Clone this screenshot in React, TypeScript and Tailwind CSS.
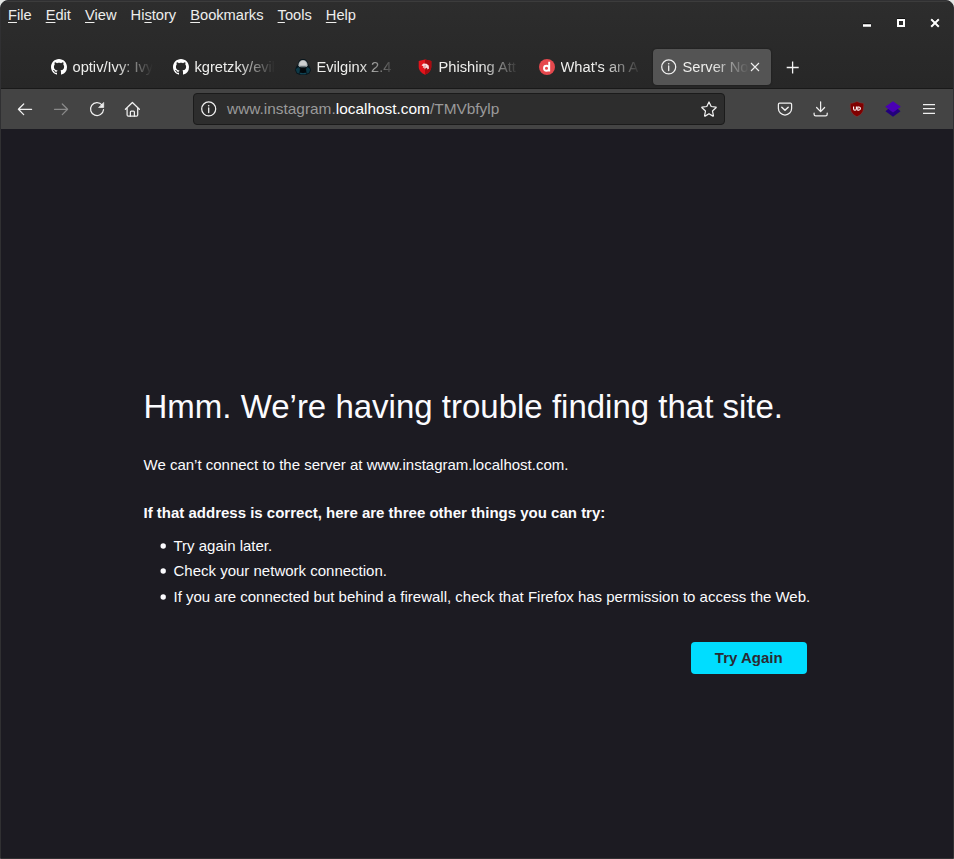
import type { ReactNode } from "react";

const menus: [string, string, string][] = [
  ["", "F", "ile"],
  ["", "E", "dit"],
  ["", "V", "iew"],
  ["Hi", "s", "tory"],
  ["", "B", "ookmarks"],
  ["", "T", "ools"],
  ["", "H", "elp"],
];

function GitHub() {
  return (
    <svg width="16" height="16" viewBox="0 0 16 16" fill="#fff">
      <path d="M8 0C3.58 0 0 3.58 0 8c0 3.54 2.29 6.53 5.47 7.59.4.07.55-.17.55-.38 0-.19-.01-.82-.01-1.49-2.01.37-2.53-.49-2.69-.94-.09-.23-.48-.94-.82-1.13-.28-.15-.68-.52-.01-.53.63-.01 1.08.58 1.23.82.72 1.21 1.87.87 2.33.66.07-.52.28-.87.51-1.07-1.78-.2-3.64-.89-3.64-3.95 0-.87.31-1.59.82-2.15-.08-.2-.36-1.02.08-2.12 0 0 .67-.21 2.2.82.64-.18 1.32-.27 2-.27s1.36.09 2 .27c1.53-1.04 2.2-.82 2.2-.82.44 1.1.16 1.92.08 2.12.51.56.82 1.27.82 2.15 0 3.07-1.87 3.75-3.65 3.95.29.25.54.73.54 1.48 0 1.07-.01 1.93-.01 2.2 0 .21.15.46.55.38A8.01 8.01 0 0 0 16 8c0-4.42-3.58-8-8-8z" />
    </svg>
  );
}

function Hooded() {
  return (
    <svg width="16" height="16" viewBox="0 0 16 16">
      <path d="M3 5Q3.500 0 8 0t5 5l2 3 1 3-1.500 3.500L11 16H5l-3.500-1.500L0 11l1-3z" fill="#08161d" />
      <path d="M3.300 6.500Q3.700 1 8 1t4.700 5.500L11.500 8h-7z" fill="#9da3a6" />
      <path d="M4.500 4Q5.500 1.500 8 1.500t3.500 2.500l.3 2.500H4.200z" fill="#cdd0d1" />
      <path d="M5 7.200h6L10.200 8.500H5.800z" fill="#59666b" />
      <path d="M.7 10.300l2.800-2.300L5 10l-.8 4.400L2 13.700zM15.300 10.300L12.500 8 11 10l.8 4.400 2.200-.7z" fill="#0d3947" />
      <path d="M4.500 14.200h7l-1 1h-5z" fill="#155468" />
      <path d="M5.500 8.800h5l.5 4-3 1.500-3-1.500z" fill="#02080c" />
    </svg>
  );
}

function RedShield() {
  return (
    <svg width="16" height="16" viewBox="0 0 16 16">
      <path d="M8 .5L14.300 2v6q0 5-6.300 7.800Q1.700 13 1.700 8V2z" fill="#e3131b" />
      <path d="M8 .5L14.300 2v6q0 5-6.300 7.800z" fill="#a90b10" />
      <path d="M4.500 6.200l2-1.600 3 .1 2.200 1.700.3 3.200-1.500.8-.4-1.500-1.300-.2-.8 1.700-.8-1.600-1.600-.4 1-1z" fill="#f7dddd" />
      <path d="M7.500 6.800l1.500.2M7 8.200l1.200-.3" stroke="#d0555a" strokeWidth=".6" />
    </svg>
  );
}

function LetterD() {
  return (
    <svg width="16" height="16" viewBox="0 0 16 16">
      <circle cx="8" cy="8" r="8" fill="#e5484d" />
      <circle cx="7.500" cy="9.200" r="2.500" fill="none" stroke="#fff" strokeWidth="1.900" />
      <path d="M10.200 2.700v9.900" stroke="#fff" strokeWidth="1.900" />
    </svg>
  );
}

function Info() {
  return (
    <svg width="16" height="16" viewBox="0 0 16 16" fill="none" stroke="#f0f0f0">
      <circle cx="7.700" cy="7.900" r="7" strokeWidth="1.250" />
      <path d="M7.700 7v4.500" strokeWidth="1.300" strokeLinecap="round" />
      <circle cx="7.700" cy="4.700" r=".8" fill="#f0f0f0" stroke="none" />
    </svg>
  );
}

function Line({ children, className = "" }: { children: ReactNode; className?: string }) {
  return (
    <svg
      width="16"
      height="16"
      viewBox="0 0 16 16"
      fill="none"
      stroke="#f0f0f0"
      strokeWidth="1.250"
      strokeLinecap="round"
      strokeLinejoin="round"
      className={className}
    >
      {children}
    </svg>
  );
}

const tabs: { icon: ReactNode; label: string }[] = [
  { icon: <GitHub />, label: "optiv/Ivy: Ivy" },
  { icon: <GitHub />, label: "kgretzky/evil" },
  { icon: <Hooded />, label: "Evilginx 2.4" },
  { icon: <RedShield />, label: "Phishing Att" },
  { icon: <LetterD />, label: "What's an A" },
];

const fade = "[mask-image:linear-gradient(to_left,transparent,black_38px)]";

const tips = [
  "Try again later.",
  "Check your network connection.",
  "If you are connected but behind a firewall, check that Firefox has permission to access the Web.",
];

export default function App() {
  return (
    <div className="h-[859px] w-[954px] overflow-hidden bg-[#e4e6e4] font-['Liberation_Sans',Arial,sans-serif]">
      <div className="flex h-full flex-col overflow-hidden rounded-t-[8px] border border-[#303032] bg-[#1c1b22]">
        <header className="flex h-[88px] shrink-0 flex-col border-t border-b border-t-[#3c3c3c] border-b-[#191919] bg-linear-to-b from-[#2d2d2d] to-[#272727] text-[14.667px] text-[#eeeeec]">
          <div className="flex h-[46px] justify-between">
            <nav className="flex gap-[14.05px] pt-[3px] pl-[7px] leading-[20px]">
              {menus.map(([a, key, b]) => (
                <span key={key + b}>
                  {a}
                  <span className="underline decoration-1 underline-offset-2">{key}</span>
                  {b}
                </span>
              ))}
            </nav>
            <div className="flex gap-[24px] pt-[16px] pr-[13px]">
              <svg width="10" height="10" viewBox="0 0 10 10">
                <path d="M1 5.500h8" stroke="#111" />
                <path d="M1 7.500h8" stroke="#fff" strokeWidth="2.600" />
              </svg>
              <svg width="10" height="10" viewBox="0 0 10 10" fill="none">
                <path d="M1 .5h8" stroke="#111" />
                <path d="M2 2h6v6H2z" stroke="#fff" strokeWidth="2" />
              </svg>
              <svg width="10" height="10" viewBox="0 0 10 10">
                <path d="M1.500 .7l7 7M8.500 .7l-7 7" stroke="#111" strokeWidth="2" />
                <path d="M1.200 1.200l7.600 7.600M8.800 1.200l-7.600 7.600" stroke="#fff" strokeWidth="2" />
              </svg>
            </div>
          </div>
          <div className="flex h-[38px] items-center gap-1 pl-[42px]">
            {tabs.map((t) => (
              <div key={t.label} className="flex h-9 w-[118px] items-center gap-[5.5px] px-2">
                <span className="shrink-0">{t.icon}</span>
                <span className={`flex-1 whitespace-nowrap ${fade}`}>{t.label}</span>
              </div>
            ))}
            <div className="flex h-9 w-[118px] items-center rounded bg-[#545454] pr-[10px] pl-2 shadow-[0_0_2px_#151515]">
              <span className="mr-[5.5px] shrink-0">
                <Info />
              </span>
              <span className={`w-0 flex-1 whitespace-nowrap ${fade}`}>Server No</span>
              <svg width="12" height="12" viewBox="0 0 12 12" stroke="#eee" strokeWidth="1.100" className="shrink-0">
                <path d="M2 2l8 8M10 2l-8 8" />
              </svg>
            </div>
            <svg width="16" height="16" viewBox="0 0 16 16" stroke="#f4f4f4" strokeWidth="1.300" className="ml-[10px]">
              <path d="M1.700 8.500h12M7.600 2.500v12" />
            </svg>
          </div>
        </header>

        <div className="flex h-10 shrink-0 items-center bg-[#444444] pr-4 pl-4">
          <div className="flex gap-5">
            <Line>
              <path d="M14.600 8.300H1.400M6.700 3L1.400 8.300l5.300 5.300" />
            </Line>
            <Line className="opacity-40">
              <path d="M1.500 8.300h13M9.300 3l5.300 5.300-5.300 5.300" />
            </Line>
            <Line>
              <path d="M13 3.900A6.500 6.500 0 1 0 14.500 8.700" />
              <path d="M14.700 1.800v4.700H10z" fill="#f0f0f0" strokeWidth=".7" />
            </Line>
            <Line className="-ml-px">
              <path d="M1.400 8.300l7-6.800 7 6.800M3.100 7v7q0 1.200 1.200 1.200h8.200q1.200 0 1.200-1.200V7" />
              <path d="M6.400 15.200v-4.300q0-.9.900-.9h2.200q.9 0 .9.900v4.300" />
            </Line>
          </div>
          <div className="ml-[53px] flex h-8 w-[532px] items-center rounded border border-[#1b1b1b] bg-[#2d2d2d] px-[7px] text-[15.42px] text-[#9a9a9a]">
            <Info />
            <span className="ml-[10px] flex-1 whitespace-nowrap">
              www.instagram.<span className="text-white">localhost.com</span>/TMVbfylp
            </span>
            <Line>
              <path d="M8 1l2.200 4.500 4.700.6q.5.200.1.600l-3.500 3.300.9 4.700q0 .6-.5.400L8 12.700l-3.900 2.400q-.5.200-.5-.4l.9-4.700L1 6.700q-.4-.4.100-.6l4.700-.6z" />
            </Line>
          </div>
          <div className="ml-auto flex gap-5">
            <Line>
              <path d="M2.600 2.200h10.800q1.200 0 1.200 1.200v4a6.600 6.600 0 0 1-13.200 0v-4q0-1.200 1.200-1.200z" />
              <path d="M4.800 6.200L8 9.200l3.200-3" strokeWidth="1.500" />
            </Line>
            <Line>
              <path d="M7.600 .8v9.500M3.600 6.500l4 4.100 4-4.100M1.100 12.200v1q0 1.600 1.600 1.600h9.900q1.600 0 1.600-1.600v-1" />
            </Line>
            <svg width="16" height="16" viewBox="0 0 16 16" fill="none">
              <path d="M8 .5Q10.500 2 14.700 2.300C15 9.500 14 13 8 15.700 2 13 1 9.500 1.300 2.300 5.500 2 8 .5 8 .5z" fill="#800000" stroke="#7d4545" strokeWidth=".5" />
              <path d="M4.600 5.500v2.200q0 1.500 1.400 1.500t1.400-1.500V5.500" stroke="#fff" strokeWidth="1.100" />
              <path d="M8.800 6h1a1.600 1.600 0 0 1 0 3.200h-1z" stroke="#fff" strokeWidth="1.100" />
            </svg>
            <svg width="16" height="16" viewBox="0 0 16 16">
              <path d="M.5 10.300L3 8h10l2.500 2.300L8 15.700z" fill="#22007c" />
              <path d="M8 .2l7.800 5.600L8 11.400.2 5.800z" fill="#4a00b4" />
            </svg>
            <svg width="16" height="16" viewBox="0 0 16 16" stroke="#f0f0f0" strokeWidth="1.250">
              <path d="M2 3.500h12M2 7.700h12M2 12.400h12" />
            </svg>
          </div>
        </div>

        <main className="flex flex-1 flex-col pt-[258px] pr-[146px] pl-[142.5px] text-[15px] text-[#fbfbfe]">
          <h1 className="text-[33px] leading-[40px] whitespace-nowrap">Hmm. We’re having trouble finding that site.</h1>
          <p className="mt-[25px] leading-[26px]">We can’t connect to the server at www.instagram.localhost.com.</p>
          <p className="mt-[22px] leading-[26px] font-bold">
            If that address is correct, here are three other things you can try:
          </p>
          <ul className="mt-[7px] flex h-[77px] flex-col pl-[16.5px] whitespace-nowrap">
            {tips.map((tip) => (
              <li key={tip} className="flex items-center leading-[25px] last:mt-px">
                <svg width="6" height="6" viewBox="0 0 6 6" className="mt-px mr-[7.5px] shrink-0">
                  <circle cx="3.200" cy="3" r="2.700" fill="#fbfbfe" />
                </svg>
                {tip}
              </li>
            ))}
          </ul>
          <button className="mt-[32px] h-8 w-[116px] self-end rounded bg-[#00ddff] pr-[6.5px] pl-[6px] font-bold text-[#2b2a33]">
            Try Again
          </button>
        </main>
      </div>
    </div>
  );
}
